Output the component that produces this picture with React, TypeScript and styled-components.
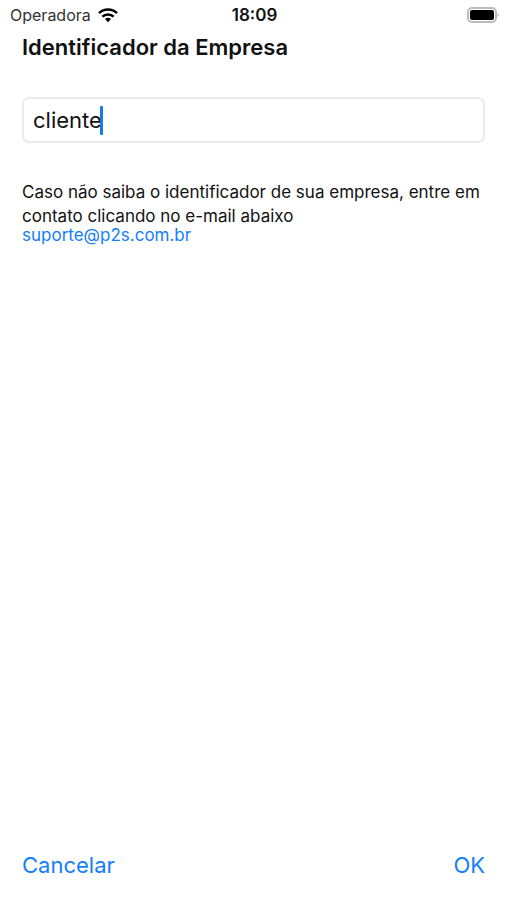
import React, { useState } from 'react';
import styled, { createGlobalStyle } from 'styled-components';

const GlobalStyle = createGlobalStyle`
  * { box-sizing: border-box; }
  body { margin: 0; background: #fff; color: #111; font-family: Inter, "Liberation Sans", sans-serif; }
`;

const Screen = styled.div`
  min-height: 100vh;
  display: flex;
  flex-direction: column;
`;

const StatusBar = styled.header`
  display: grid;
  grid-template-columns: 1fr auto 1fr;
  align-items: center;
  height: 30px;
  padding: 0 8px 0 10px;
  font-size: 16px;
`;

const Carrier = styled.div`
  display: flex;
  align-items: center;
  gap: 7px;
  color: #333;
`;

const Clock = styled.time`
  font-size: 17px;
  font-weight: 600;
`;

const BatterySlot = styled.div`
  display: flex;
  justify-content: flex-end;
`;

const Form = styled.form`
  flex: 1;
  display: flex;
  flex-direction: column;
  padding: 0 22px;
`;

const Title = styled.label`
  font-size: 22px;
  font-weight: 600;
  line-height: 34px;
`;

const FieldFrame = styled.div`
  display: flex;
  align-items: center;
  height: 46px;
  margin: 33px 0 37px;
  padding: 0 9px;
  border: 2px solid #ebebeb;
  border-radius: 7px;
  overflow: hidden;
`;

const Field = styled.input`
  field-sizing: content;
  min-width: 1px;
  max-width: 100%;
  padding: 0;
  border: 0;
  background: none;
  font: inherit;
  font-size: 22px;
  color: #111;
  caret-color: transparent;
  outline: none;
`;

const Caret = styled.span`
  flex: none;
  width: 3px;
  height: 29px;
  margin-left: -2px;
  border-radius: 1px;
  background: #147ce8;
`;

const Hint = styled.p`
  margin: 0;
  font-size: 17px;
  line-height: 24px;
`;

const MailLink = styled.a`
  align-self: flex-start;
  font-size: 17px;
  line-height: 15px;
  color: #147efb;
  text-decoration: none;
`;

const Actions = styled.footer`
  display: flex;
  justify-content: space-between;
  margin-top: auto;
  padding-bottom: 20px;
`;

const ActionButton = styled.button`
  padding: 0;
  border: 0;
  background: none;
  font: inherit;
  font-size: 22px;
  line-height: 30px;
  color: #147efb;
  cursor: pointer;
`;

const WifiIcon = () => (
  <svg width="20" height="15" viewBox="0 0 20 15" aria-hidden="true">
    <g fill="none" stroke="#000" strokeWidth="2.5">
      <path d="M1 5.1A13 13 0 0 1 19 5.1" />
      <path d="M4.3 8.7A8.2 8.2 0 0 1 15.7 8.7" />
    </g>
    <path d="M10 9.8C8.8 9.8 7.8 10.2 7 10.9L10 14.3L13 10.9A4.4 4.4 0 0 0 10 9.8Z" />
  </svg>
);

const BatteryIcon = () => (
  <svg width="32" height="16" viewBox="0 0 32 16" aria-hidden="true">
    <rect x="1" y="1" width="28" height="14" rx="4" fill="#fff" stroke="#bcbcbc" strokeWidth="2" />
    <rect x="3" y="3" width="24" height="10" rx="2" />
    <path d="M30.5 6C32.2 6.4 32.2 9.6 30.5 10Z" fill="#bcbcbc" />
  </svg>
);

export default function App() {
  const [company, setCompany] = useState('cliente');

  return (
    <Screen>
      <GlobalStyle />
      <StatusBar>
        <Carrier>
          Operadora
          <WifiIcon />
        </Carrier>
        <Clock>18:09</Clock>
        <BatterySlot>
          <BatteryIcon />
        </BatterySlot>
      </StatusBar>
      <Form onSubmit={(event) => event.preventDefault()}>
        <Title htmlFor="company">Identificador da Empresa</Title>
        <FieldFrame>
          <Field id="company" value={company} onChange={(event) => setCompany(event.target.value)} />
          <Caret aria-hidden="true" />
        </FieldFrame>
        <Hint>Caso não saiba o identificador de sua empresa, entre em contato clicando no e-mail abaixo</Hint>
        <MailLink href="mailto:suporte@p2s.com.br">suporte@p2s.com.br</MailLink>
        <Actions>
          <ActionButton type="button">Cancelar</ActionButton>
          <ActionButton type="submit">OK</ActionButton>
        </Actions>
      </Form>
    </Screen>
  );
}
